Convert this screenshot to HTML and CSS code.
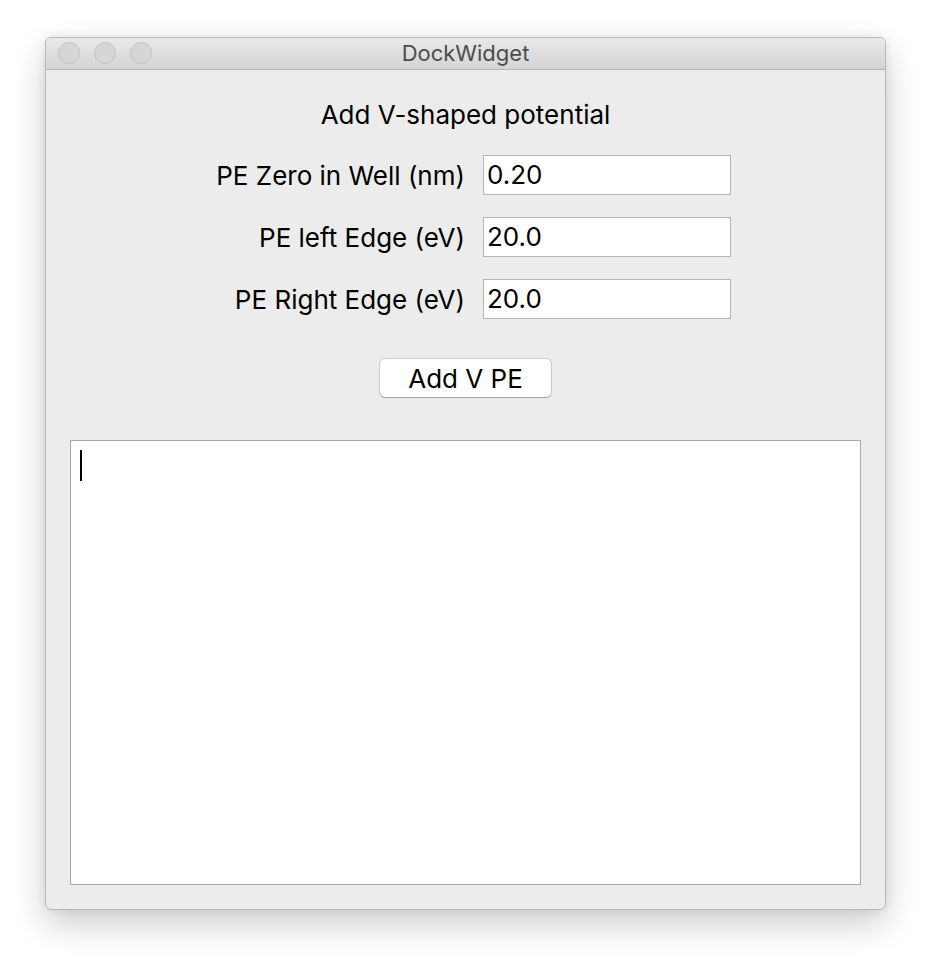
FILE: index.html
```html
<!DOCTYPE html>
<html>
<head>
<meta charset="utf-8">
<link rel="stylesheet" href="styles.css">
</head>
<body>
<div class="window">
  <div class="titlebar">
    <div class="lights">
      <span class="light"></span>
      <span class="light"></span>
      <span class="light"></span>
    </div>
    <div class="title">DockWidget</div>
  </div>
  <div class="content">
    <div class="heading">Add V-shaped potential</div>
    <div class="form">
      <label class="label">PE Zero in Well (nm)</label>
      <div class="field">0.20</div>
      <label class="label">PE left Edge (eV)</label>
      <div class="field">20.0</div>
      <label class="label">PE Right Edge (eV)</label>
      <div class="field">20.0</div>
    </div>
    <div class="actions">
      <button class="btn">Add V PE</button>
    </div>
    <div class="output"><span class="caret"></span></div>
  </div>
</div>
</body>
</html>
```
FILE: styles.css
```css
html, body {
  margin: 0;
  padding: 0;
  background: #ffffff;
}
body {
  font-family: Inter, "Liberation Sans", sans-serif;
  padding: 37px 0 54px 45px;
}
.window {
  width: 839px;
  height: 871px;
  border: 1px solid #b9b9b9;
  border-radius: 6px;
  background: #ececec;
  box-shadow: 0 14px 34px rgba(0,0,0,0.2), 0 0 10px rgba(0,0,0,0.08);
  display: flex;
  flex-direction: column;
  overflow: hidden;
}
.titlebar {
  height: 31px;
  border-bottom: 1px solid #b7b7b7;
  background: linear-gradient(#e9e9e9, #d4d4d4);
  position: relative;
}
.lights {
  position: absolute;
  left: 12px;
  top: 4px;
  display: flex;
  gap: 14px;
}
.light {
  width: 20px;
  height: 20px;
  border-radius: 50%;
  border: 1px solid #c2c2c2;
  background: #d6d6d6;
}
.title {
  text-align: center;
  font-size: 22px;
  color: #4c4c4c;
  line-height: 31px;
}
.content {
  flex: 1;
  display: flex;
  flex-direction: column;
  padding: 30px 24px 24px 24px;
}
.heading {
  text-align: center;
  font-size: 26px;
  line-height: 30px;
  color: #000;
}
.form {
  margin-top: 25px;
  display: grid;
  grid-template-columns: 395px 248px;
  column-gap: 18px;
  row-gap: 22px;
  align-items: center;
}
.label {
  text-align: right;
  font-size: 26px;
  color: #000;
}
.field {
  height: 38px;
  border: 1px solid #b4b4b4;
  background: #fff;
  font-size: 26px;
  line-height: 38px;
  padding-left: 3px;
  color: #000;
}
.actions {
  margin-top: 40px;
  display: flex;
  justify-content: center;
}
.btn {
  width: 171px;
  height: 38px;
  border: none;
  border-radius: 5px;
  background: #fff;
  box-shadow: 0 0 0 1px rgba(0,0,0,0.13), 0 1px 1px rgba(0,0,0,0.22);
  font-family: Inter, "Liberation Sans", sans-serif;
  font-size: 26px;
  color: #000;
  padding: 0;
}
.output {
  margin-top: 43px;
  flex: 1;
  border: 1px solid #a9a9a9;
  background: #fff;
  padding: 9px 0 0 9px;
}
.caret {
  display: block;
  width: 2px;
  height: 31px;
  background: #000;
}
```
